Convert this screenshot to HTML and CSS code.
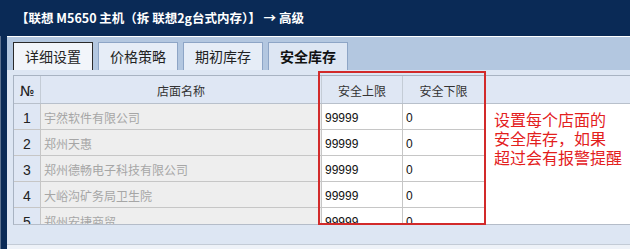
FILE: index.html
```html
<!DOCTYPE html>
<html lang="zh-CN">
<head>
    <meta charset="UTF-8">
    <title>安全库存</title>
    <link rel="stylesheet" href="styles.css">
</head>
<body>
    <div class="header">【联想 M5650 主机（拆 联想2g台式内存）】 → 高级</div>

    <div class="main">
        <div class="edge"></div>
        <div class="panel">
            <div class="tabs">
                <div class="tab focus">详细设置</div>
                <div class="tab">价格策略</div>
                <div class="tab">期初库存</div>
                <div class="tab active">安全库存</div>
            </div>

            <div class="content">
                <div class="grid">
                    <div class="row head">
                        <div class="cell num">№</div>
                        <div class="cell name">店面名称</div>
                        <div class="cell val">安全上限</div>
                        <div class="cell val">安全下限</div>
                        <div class="cell fill"></div>
                    </div>
                    <div class="body">
                        <div class="row">
                            <div class="cell num">1</div>
                            <div class="cell name">宇然软件有限公司</div>
                            <div class="cell val">99999</div>
                            <div class="cell val">0</div>
                        </div>
                        <div class="row">
                            <div class="cell num">2</div>
                            <div class="cell name">郑州天惠</div>
                            <div class="cell val">99999</div>
                            <div class="cell val">0</div>
                        </div>
                        <div class="row">
                            <div class="cell num">3</div>
                            <div class="cell name">郑州德畅电子科技有限公司</div>
                            <div class="cell val">99999</div>
                            <div class="cell val">0</div>
                        </div>
                        <div class="row">
                            <div class="cell num">4</div>
                            <div class="cell name">大峪沟矿务局卫生院</div>
                            <div class="cell val">99999</div>
                            <div class="cell val">0</div>
                        </div>
                        <div class="row">
                            <div class="cell num">5</div>
                            <div class="cell name">郑州安捷商贸</div>
                            <div class="cell val">99999</div>
                            <div class="cell val">0</div>
                        </div>
                    </div>
                </div>

                <!-- 标注 -->
                <div class="mark"></div>
                <div class="note">设置每个店面的<br>安全库存，如果<br>超过会有报警提醒</div>
            </div>
            <div class="footer"></div>
        </div>
    </div>
</body>
</html>
```

FILE: styles.css
```css
* {
    margin: 0;
    padding: 0;
    box-sizing: border-box;
}

body {
    font-family: 'Liberation Sans', 'Noto Sans CJK SC', sans-serif;
    background: #0a2a56;
    width: 630px;
    height: 249px;
    overflow: hidden;
}

.header {
    height: 36px;
    line-height: 36px;
    padding-left: 16px;
    color: white;
    font-family: 'Noto Sans CJK SC', sans-serif;
    font-size: 12.5px;
    font-weight: bold;
    white-space: nowrap;
}

.main {
    display: flex;
    height: 213px;
}

.edge {
    width: 7px;
    border-left: 1px solid #5d7290;
}

.panel {
    flex: 1;
    display: flex;
    flex-direction: column;
    border-top: 1px solid #ffffff;
    background: #dde6f3;
}

.tabs {
    height: 33px;
    background: #b3c7e0;
    display: flex;
    gap: 5px;
    padding: 5px 0 0 6px;
}

.tab {
    width: 80px;
    height: 28px;
    border: 1px solid #8da5c6;
    border-bottom: none;
    background: #e6edf7;
    color: #222;
    font-family: 'Noto Sans CJK SC', sans-serif;
    font-size: 14px;
    line-height: 27px;
    text-align: center;
}

.tab.focus {
    border-color: #2a2a2a;
    background: #f2f5fa;
}

.tab.active {
    background: #dde6f3;
    font-weight: bold;
    color: #111;
}

.content {
    position: relative;
    padding: 5px 0 0 6px;
    height: 174px;
}

.grid {
    border-top: 1px solid #a8b3c2;
    border-left: 1px solid #a8b3c2;
    border-bottom: 1px solid #b4bcc8;
}

.row {
    display: flex;
    height: 26px;
    border-bottom: 1px solid #c6c6c6;
}

.row.head {
    height: 28px;
    border-bottom-color: #b8c0cb;
    background: #dfe7f4;
}

.cell {
    height: 100%;
    display: flex;
    align-items: center;
    padding-top: 2px;
    border-right: 1px solid #c6c6c6;
    font-size: 12px;
    white-space: nowrap;
    overflow: hidden;
}

.cell.num {
    width: 27px;
    justify-content: center;
    background: #dfe7f4;
    color: #222;
    font-size: 14px;
}

.cell.name {
    width: 281px;
    padding-left: 3px;
    background: #eeeeee;
    color: #a6a6a6;
    font-family: 'Noto Sans CJK SC', sans-serif;
}

.cell.val {
    width: 81px;
    padding-left: 3px;
    background: #ffffff;
    color: #111;
}

.cell.val + .cell.val {
    width: 82px;
}

.head .cell {
    background: #dfe7f4;
    color: #333;
    justify-content: center;
    padding-left: 0;
    border-right-color: #c4ccd6;
    font-family: 'Noto Sans CJK SC', sans-serif;
}

.head .cell.num {
    font-family: 'DejaVu Sans', sans-serif;
    font-size: 14px;
    color: #222;
}

.cell.fill {
    flex: 1;
    border-right: none;
}

.body {
    height: 120px;
    overflow: hidden;
    background: #ffffff;
}

.body .row {
    width: 472px;
}

.mark {
    position: absolute;
    left: 311px;
    top: 1px;
    width: 168px;
    height: 154px;
    border: 2px solid #d22a2a;
}

.note {
    position: absolute;
    left: 487px;
    top: 40px;
    color: #e3201d;
    font-family: 'Noto Sans CJK SC', sans-serif;
    font-size: 16px;
    line-height: 19px;
    white-space: nowrap;
}

.footer {
    flex: 1;
    border-top: 1px solid #c3cbd6;
    background: #eef2f8;
}
```
